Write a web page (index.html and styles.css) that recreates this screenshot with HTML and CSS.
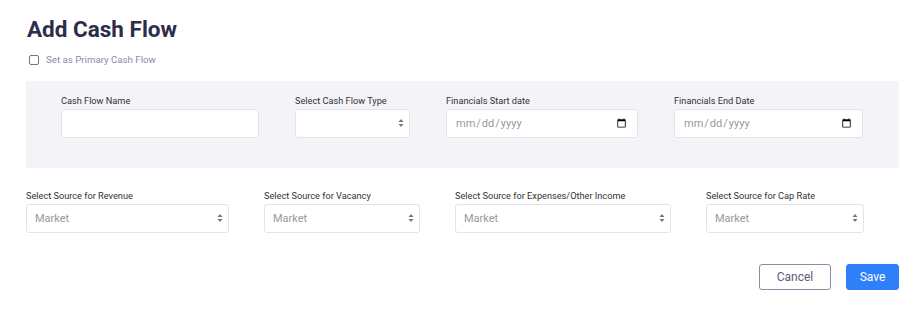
FILE: index.html
```html
<!DOCTYPE html>
<html lang="en">
<head>
  <meta charset="UTF-8">
  <meta name="viewport" content="width=device-width,initial-scale=1">
  <title>Add Cash Flow</title>
  <link rel="stylesheet" href="styles.css">
</head>
<body>
  <div class="modal">
    <h1 class="modal-title">Add Cash Flow</h1>
    <label class="check-row">
      <input type="checkbox" class="check-box">
      <span>Set as Primary Cash Flow</span>
    </label>

    <div class="panel">
      <div class="field">
        <label class="field-label">Cash Flow Name</label>
        <input type="text" class="control">
      </div>
      <div class="field">
        <label class="field-label">Select Cash Flow Type</label>
        <div class="select-wrap">
          <select class="control select"><option></option></select>
          <svg class="select-arrows" viewBox="0 0 6 10" width="6" height="10"><path d="M3 1L5.5 4H0.5z M3 9L5.5 6H0.5z" fill="#777"/></svg>
        </div>
      </div>
      <div class="field">
        <label class="field-label">Financials Start date</label>
        <input type="date" class="control date">
      </div>
      <div class="field">
        <label class="field-label">Financials End Date</label>
        <input type="date" class="control date">
      </div>
    </div>

    <div class="sources">
      <div class="field">
        <label class="field-label">Select Source for Revenue</label>
        <div class="select-wrap">
          <select class="control select"><option>Market</option></select>
          <svg class="select-arrows" viewBox="0 0 6 10" width="6" height="10"><path d="M3 1L5.5 4H0.5z M3 9L5.5 6H0.5z" fill="#777"/></svg>
        </div>
      </div>
      <div class="field">
        <label class="field-label">Select Source for Vacancy</label>
        <div class="select-wrap">
          <select class="control select"><option>Market</option></select>
          <svg class="select-arrows" viewBox="0 0 6 10" width="6" height="10"><path d="M3 1L5.5 4H0.5z M3 9L5.5 6H0.5z" fill="#777"/></svg>
        </div>
      </div>
      <div class="field">
        <label class="field-label">Select Source for Expenses/Other Income</label>
        <div class="select-wrap">
          <select class="control select"><option>Market</option></select>
          <svg class="select-arrows" viewBox="0 0 6 10" width="6" height="10"><path d="M3 1L5.5 4H0.5z M3 9L5.5 6H0.5z" fill="#777"/></svg>
        </div>
      </div>
      <div class="field">
        <label class="field-label">Select Source for Cap Rate</label>
        <div class="select-wrap">
          <select class="control select"><option>Market</option></select>
          <svg class="select-arrows" viewBox="0 0 6 10" width="6" height="10"><path d="M3 1L5.5 4H0.5z M3 9L5.5 6H0.5z" fill="#777"/></svg>
        </div>
      </div>
    </div>

    <div class="actions">
      <button class="btn btn-cancel">Cancel</button>
      <button class="btn btn-save">Save</button>
    </div>
  </div>
</body>
</html>
```

FILE: styles.css
```css
* { box-sizing: border-box; }
body {
  margin: 0;
  background: #fff;
  font-family: Roboto, 'Liberation Sans', Arial, sans-serif;
  color: #333;
}
.modal { padding: 15px 20px 0 26px; }
.modal-title {
  margin: 0 0 0 1px;
  font-size: 22.5px; line-height: 28px; font-weight: 700;
  color: #2e2c4b;
}
.check-row {
  display: flex; align-items: center; gap: 7px;
  margin: 10px 0 0 3px;
  font-size: 9.7px; line-height: 14px; color: #8d8aab;
}
.check-box {
  margin: 0; width: 10px; height: 10px;
  appearance: none; -webkit-appearance: none;
  border: 1px solid #76737f; border-radius: 2px; background: #fff;
}
.panel {
  margin-top: 14px;
  background: #f4f4f8;
  padding: 13px 35px 30px 35px;
  display: grid;
  grid-template-columns: 198px 115px 192px 189px;
  gap: 36px;
}
.field { display: flex; flex-direction: column; }
.field-label {
  font-size: 9.2px; line-height: 14px; color: #333;
  margin-bottom: 1px;
}
.control {
  height: 29px; width: 100%;
  border: 1px solid #e3e3ea; border-radius: 3px;
  background: #fff;
  font-family: inherit; font-size: 11px; color: #999;
  padding: 0 8px;
  outline: none;
}
.date { color: #999; padding-right: 8px; }
.select-wrap { position: relative; }
.select {
  appearance: none; -webkit-appearance: none;
  padding-left: 8px;
}
.select-arrows {
  position: absolute; right: 6px; top: 9px;
  pointer-events: none;
}
.sources {
  margin-top: 21px;
  display: grid;
  grid-template-columns: 203px 156px 216px 158px;
  gap: 35px;
}
.actions {
  margin-top: 31px;
  display: flex; justify-content: flex-end; gap: 15px;
}
.btn {
  height: 26px; border-radius: 3px;
  font-family: inherit; font-size: 12px;
  cursor: pointer;
}
.btn-cancel {
  width: 72px;
  background: #fff; border: 1px solid #8d8aa6; color: #5c5a78;
}
.btn-save {
  width: 53px;
  background: #2f7ff8; border: 1px solid #2f7ff8; color: #fff;
}
```
